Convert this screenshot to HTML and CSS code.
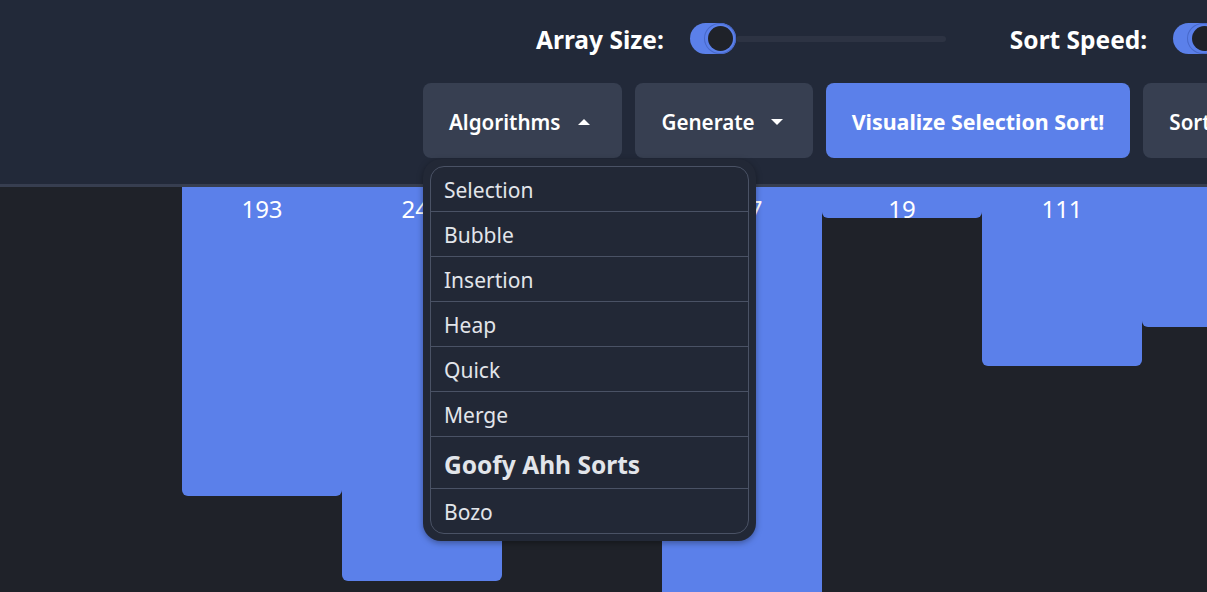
FILE: index.html
```html
<!DOCTYPE html>
<html>
<head>
<meta charset="utf-8">
<link rel="stylesheet" href="styles.css">
</head>
<body>
<header class="header">
  <div class="controls">
    <span class="label">Array Size:</span>
    <div class="slider">
      <div class="fill"><div class="thumb"><div class="thumb-core"></div></div></div>
      <div class="track"></div>
    </div>
    <span class="label label-speed">Sort Speed:</span>
    <div class="slider">
      <div class="fill"><div class="thumb"><div class="thumb-core"></div></div></div>
      <div class="track"></div>
    </div>
  </div>
  <div class="actions">
    <div class="dropdown">
      <button class="btn btn-gray btn-alg">Algorithms <span class="caret caret-up"></span></button>
      <div class="menu">
        <ul class="list">
          <li class="item">Selection</li>
          <li class="item">Bubble</li>
          <li class="item">Insertion</li>
          <li class="item">Heap</li>
          <li class="item">Quick</li>
          <li class="item">Merge</li>
          <li class="item item-head">Goofy Ahh Sorts</li>
          <li class="item">Bozo</li>
        </ul>
      </div>
    </div>
    <button class="btn btn-gray btn-gen">Generate <span class="caret caret-down"></span></button>
    <button class="btn btn-blue">Visualize Selection Sort!</button>
    <button class="btn btn-gray">Sort Info</button>
  </div>
</header>
<main class="bars">
  <div class="bar" style="height:309px">193</div>
  <div class="bar" style="height:394px">246</div>
  <div class="bar" style="height:240px">150</div>
  <div class="bar" style="height:430px">257</div>
  <div class="bar" style="height:31px">19</div>
  <div class="bar" style="height:179px">111</div>
  <div class="bar" style="height:140px">87</div>
</main>
</body>
</html>
```
FILE: styles.css
```css
html, body {
  margin: 0;
  padding: 0;
}
body {
  width: 1207px;
  height: 592px;
  overflow: hidden;
  background: #1f2229;
  font-family: "Noto Sans", "Open Sans", sans-serif;
  color: #fff;
}
.header {
  height: 184px;
  background: #222939;
  border-bottom: 3px solid #373e50;
  box-sizing: content-box;
  display: flex;
  flex-direction: column;
  overflow: visible;
  position: relative;
  z-index: 2;
}
.controls {
  display: flex;
  align-items: center;
  padding-left: 536px;
  padding-top: 23px;
  height: 31px;
  white-space: nowrap;
}
.label {
  font-size: 24.5px;
  font-weight: 700;
  margin-right: 26px;
  padding-top: 2px;
}
.label-speed {
  margin-left: 64px;
}
.slider {
  display: flex;
  align-items: center;
  width: 256px;
  flex-shrink: 0;
}
.fill {
  width: 46px;
  height: 31px;
  border-radius: 16px;
  background: #5b80ea;
  display: flex;
  justify-content: flex-end;
  flex-shrink: 0;
}
.thumb {
  width: 32px;
  height: 31px;
  border-radius: 50%;
  border: 1px solid #4868c9;
  box-sizing: border-box;
  display: flex;
  align-items: center;
  justify-content: center;
}
.thumb-core {
  width: 25px;
  height: 25px;
  border-radius: 50%;
  background: #1f2229;
  margin-left: 2px;
}
.track {
  flex: 1;
  height: 6px;
  border-radius: 3px;
  background: #2d3343;
}
.actions {
  display: flex;
  gap: 13px;
  padding-left: 423px;
  margin-top: 29px;
  white-space: nowrap;
}
.dropdown {
  position: relative;
}
.btn {
  height: 75px;
  border: none;
  border-radius: 8px;
  font-family: inherit;
  font-size: 20.6px;
  font-weight: 600;
  color: #fff;
  padding: 2px 30px 0 26px;
  display: flex;
  align-items: center;
  flex-shrink: 0;
}
.btn-gray {
  background: #373f51;
}
.btn-alg {
  padding-right: 32px;
}
.btn-blue {
  background: #5b80ea;
  font-weight: 700;
  font-size: 21.4px;
  padding: 2px 26px 0;
}
.caret {
  display: inline-block;
  width: 0;
  height: 0;
  border-left: 6px solid transparent;
  border-right: 6px solid transparent;
  margin-left: 18px;
}
.btn-gen .caret {
  margin-left: 16px;
}
.caret-up {
  border-bottom: 6px solid #fff;
}
.caret-down {
  border-top: 6px solid #fff;
}
.menu {
  position: absolute;
  left: 0;
  top: 76px;
  width: 333px;
  padding: 7px;
  box-sizing: border-box;
  background: #222836;
  border-radius: 18px;
  box-shadow: 0 2px 6px rgba(0, 0, 0, 0.35);
}
.list {
  list-style: none;
  margin: 0;
  padding: 0;
  border: 1px solid #4a5265;
  border-radius: 14px;
  overflow: hidden;
}
.item {
  height: 44px;
  line-height: 46px;
  padding-left: 13px;
  font-size: 21px;
  color: #e2e5ea;
  border-bottom: 1px solid #4a5265;
}
.item:last-child {
  border-bottom: none;
}
.item-head {
  height: 51px;
  line-height: 55px;
  font-size: 24.5px;
  font-weight: 700;
}
.bars {
  display: flex;
  align-items: flex-start;
  padding-left: 182px;
  position: relative;
  z-index: 1;
}
.bar {
  width: 160px;
  flex-shrink: 0;
  background: #5b80ea;
  border-radius: 0 0 6px 6px;
  text-align: center;
  font-size: 24px;
  line-height: 30px;
  padding-top: 7px;
  box-sizing: border-box;
}
```
